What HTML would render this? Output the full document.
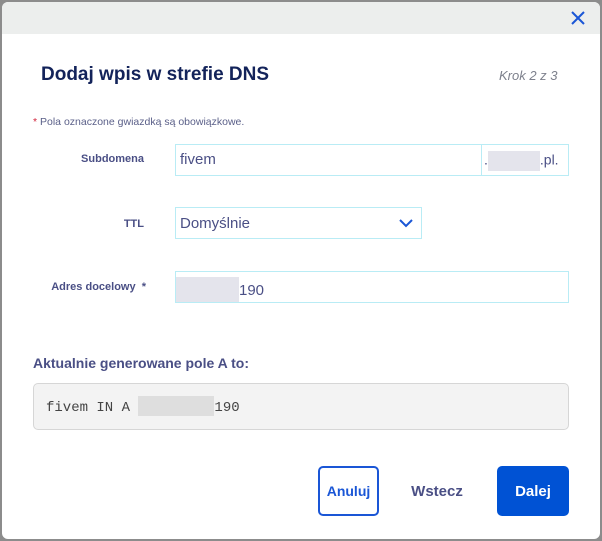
<!DOCTYPE html>
<html><head><meta charset="utf-8"><style>
*{box-sizing:border-box;margin:0;padding:0}
body{width:602px;height:541px;background:#8c8c8c;font-family:"Liberation Sans",sans-serif;position:relative;overflow:hidden}
.m{position:absolute;left:2px;top:2px;width:598px;height:537px;background:#fff;border-radius:6px;overflow:hidden}
.hd{height:32px;background:#eceeed}
.x{position:absolute;left:568px;top:8px}
.t{position:absolute;left:39px;top:62px;font-size:19px;font-weight:bold;color:#13235a}
.k{position:absolute;left:497px;top:66px;font-size:13px;font-style:italic;color:#7d808c}
.req{position:absolute;left:31px;top:114px;font-size:10.5px;color:#5a5f88}
.req b{color:#d2243c;font-weight:normal}
.lb{position:absolute;font-size:11px;font-weight:bold;color:#4a4f85;text-align:right}
.in{position:absolute;border:1px solid #b9ecf5;background:#fff;font-size:15px;color:#4a4f85}
.gr{display:inline-block;background:#e4e4ec;height:20px;vertical-align:middle}
.sec{position:absolute;left:31px;top:353px;font-size:14px;font-weight:bold;color:#4a4f85}
.code{position:absolute;left:31px;top:381px;width:536px;height:47px;background:#f3f3f3;border:1px solid #d6d6d6;border-radius:5px;font-family:"Liberation Mono",monospace;font-size:14px;color:#444;padding:12px 0 0 12px}
.b{position:absolute;top:464px;height:50px;border-radius:5px;font-weight:bold;font-size:14px;display:flex;align-items:center;justify-content:center}
</style></head><body>
<div class="m">
<div class="hd"></div>
<svg class="x" width="16" height="16" viewBox="0 0 16 16"><path d="M2 2L14 14M14 2L2 14" stroke="#1a56d6" stroke-width="2"/></svg>
<div class="t">Dodaj wpis w strefie DNS</div>
<div class="k">Krok 2 z 3</div>
<div class="req"><b>*</b> Pola oznaczone gwiazdką są obowiązkowe.</div>
<div class="lb" style="left:60px;width:82px;top:151px">Subdomena</div>
<div class="in" style="left:173px;top:142px;width:307px;height:32px;padding:6px 4px">fivem</div>
<div class="in" style="left:479px;top:142px;width:88px;height:32px;padding:6px 2px;font-size:14px">.<span class="gr" style="width:52px"></span>.pl.</div>
<div class="lb" style="left:60px;width:82px;top:216px">TTL</div>
<div class="in" style="left:173px;top:205px;width:247px;height:32px;padding:7px 4px">Domyślnie
<svg style="position:absolute;right:8px;top:11px" width="14" height="9" viewBox="0 0 14 9"><path d="M1 1L7 7L13 1" stroke="#1a56d6" stroke-width="2" fill="none"/></svg></div>
<div class="lb" style="left:30px;width:114px;top:279px">Adres docelowy &nbsp;*</div>
<div class="in" style="left:173px;top:269px;width:394px;height:32px;padding:5px 0"><span class="gr" style="width:63px;height:25px;vertical-align:-7px"></span>190</div>
<div class="sec">Aktualnie generowane pole A to:</div>
<div class="code">fivem IN A <span style="display:inline-block;width:76px;height:20px;background:#dedede;vertical-align:-5px"></span>190</div>
<div class="b" style="left:316px;width:61px;border:2px solid #1a56d6;color:#1a56d6">Anuluj</div>
<div class="b" style="left:395px;width:80px;color:#4a4f85;font-size:15px">Wstecz</div>
<div class="b" style="left:495px;width:72px;background:#0052d4;color:#fff;font-size:15px">Dalej</div>
</div>
</body></html>
